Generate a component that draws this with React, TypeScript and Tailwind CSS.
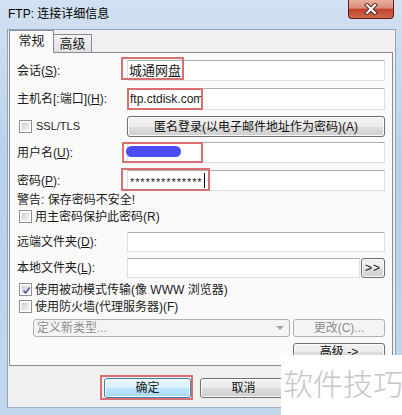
import type { ReactNode } from "react";

const FONT = "font-['Liberation_Sans','Noto_Sans_CJK_SC',sans-serif]";
const BTN =
  "flex items-center justify-center rounded-[3px] border border-[#707070] bg-[linear-gradient(#f2f2f2_0%,#ebebeb_50%,#dddddd_51%,#cfcfcf_100%)] shadow-[inset_0_0_0_1px_#fbfbfb] text-[12px] text-[#111]";
const BTN_OFF =
  "flex items-center justify-center rounded-[3px] border border-[#adb2b5] bg-[#f4f4f4] text-[12px] text-[#8d8d8d]";
const INPUT =
  "h-full bg-white border border-[#dbdfe6] border-t-[#abadb3] flex items-center px-[2px] text-[12px]";

const Check = ({ checked = false }: { checked?: boolean }) => (
  <span className="w-[13px] h-[13px] border border-[#8e8f8f] bg-white p-px shrink-0">
    <span className="relative block w-full h-full bg-[linear-gradient(135deg,#cbcfd5,#f6f6f6)] border border-[#f0f0f0]">
      {checked && (
        <svg viewBox="0 0 9 9" className="absolute inset-0 w-[9px] h-[9px]">
          <path d="M1.5 4.5 L3.6 7 L7.8 1.5" fill="none" stroke="#4a5f97" strokeWidth="1.7" />
        </svg>
      )}
    </span>
  </span>
);

const Row = ({ label, top, h, children }: { label: ReactNode; top: string; h: string; children?: ReactNode }) => (
  <div className={`flex items-center ${top} ${h}`}>
    <div className="w-[110px] shrink-0 text-[12px]">{label}</div>
    <div className="flex-1 h-full flex">{children}</div>
  </div>
);

const RedBox = ({ cls }: { cls: string }) => (
  <div className={`absolute border-2 border-[#d97070] ${cls}`} />
);

export default function App() {
  return (
    <div className={`relative w-[402px] h-[415px] overflow-hidden bg-[linear-gradient(180deg,#d2e1f2,#b9d0e9_40%,#c3d6ec)] text-[#1a1a1a] ${FONT}`}>
      {/* title bar */}
      <div className="h-[29px] flex items-center pl-[8px] pb-[2px] text-[12px] text-black">
        FTP: 连接详细信息
      </div>
      <div className="absolute top-0 right-[8px] w-[46px] h-[19px] rounded-b-[4px] border border-t-0 border-[#5e1c12] bg-[linear-gradient(#eab0a2,#d98c79_45%,#c2432a_52%,#cf6a4e_100%)] flex items-center justify-center">
        <svg viewBox="0 0 14 12" className="w-[14px] h-[12px]">
          <path d="M3 2 L11 10 M11 2 L3 10" stroke="#4a2018" strokeWidth="4" strokeLinecap="square" />
          <path d="M3 2 L11 10 M11 2 L3 10" stroke="#fff" strokeWidth="2.2" strokeLinecap="square" />
        </svg>
      </div>

      {/* client area */}
      <div className="ml-[7px] mr-[6px] h-[379px] bg-[#f0f0f0] border border-[#8ea5c0] border-b-[#9fb4cc] flex flex-col">
        {/* tabs */}
        <div className="flex items-end h-[23px] pl-px relative z-10">
          <div className="w-[45px] h-[23px] bg-[#fafafa] border border-b-0 border-[#898c95] flex items-center justify-center text-[13px] pb-[2px]">
            常规
          </div>
          <div className="w-[38px] h-[18px] mb-px bg-[linear-gradient(#f3f3f3,#e1e1e1)] border border-l-0 border-b-0 border-[#898c95] flex items-center justify-center text-[13px]">
            高级
          </div>
        </div>

        {/* panel */}
        <div className="ml-px mr-[2px] -mt-px h-[314px] bg-[#fafafa] border border-[#898c95] pl-[7px] pr-[7px] flex flex-col">
          <Row label={<>会话(<u>S</u>):</>} top="mt-[7px]" h="h-[21px]">
            <div className={`${INPUT} flex-1 pl-px text-[13px]`}>城通网盘</div>
          </Row>
          <Row label={<>主机名[:端口](<u>H</u>):</>} top="mt-[7px]" h="h-[22px]">
            <div className={`${INPUT} flex-1 pl-[2px]`}>ftp.ctdisk.com</div>
          </Row>
          <div className="mt-[6px] h-[21px] flex items-center">
            <div className="w-[110px] shrink-0 flex items-center gap-[4px] pl-[2px] text-[11px]">
              <Check />
              SSL/TLS
            </div>
            <div className={`${BTN} flex-1 h-full`}>匿名登录(以电子邮件地址作为密码)(A)</div>
          </div>
          <Row label={<>用户名(<u>U</u>):</>} top="mt-[5px]" h="h-[21px]">
            <div className={`${INPUT} flex-1`} />
          </Row>
          <Row label={<>密码(<u>P</u>):</>} top="mt-[7px]" h="h-[21px]">
            <div className={`${INPUT} flex-1 pl-[2px]`}>
              <span className="text-[11px] tracking-[0.9px] pt-[3px]">**************</span>
              <span className="w-px h-[15px] bg-black ml-px" />
            </div>
          </Row>
          <div className="h-[17px] flex items-center text-[12px]">警告: 保存密码不安全!</div>
          <div className="h-[17px] flex items-center gap-[3px] pl-[2px] text-[12px]">
            <Check />
            用主密码保护此密码(R)
          </div>
          <Row label={<>远端文件夹(<u>D</u>):</>} top="mt-[7px]" h="h-[20px]">
            <div className={`${INPUT} flex-1`} />
          </Row>
          <Row label={<>本地文件夹(<u>L</u>):</>} top="mt-[6px]" h="h-[20px]">
            <div className={`${INPUT} flex-1`} />
            <div className={`${BTN} w-[24px] ml-px text-[11px] tracking-[1px]`}>&gt;&gt;</div>
          </Row>
          <div className="mt-[3px] h-[17px] flex items-center gap-[3px] pl-[2px] text-[12px]">
            <Check checked />
            使用被动模式传输(像 WWW 浏览器)
          </div>
          <div className="h-[17px] flex items-center gap-[3px] pl-[2px] text-[12px]">
            <Check />
            使用防火墙(代理服务器)(F)
          </div>
          <div className="mt-[4px] h-[18px] flex gap-[3px] pl-[16px]">
            <div className="flex-1 h-full rounded-[3px] border border-[#adb2b5] bg-[#f4f4f4] flex items-center pl-[3px] pr-[5px] text-[12px] text-[#8d8d8d]">
              <span className="flex-1">定义新类型...</span>
              <span className="w-0 h-0 border-l-[4px] border-r-[4px] border-t-[4px] border-l-transparent border-r-transparent border-t-[#a5a5a5]" />
            </div>
            <div className={`${BTN_OFF} w-[92px]`}>更改(C)...</div>
          </div>
          <div className="mt-[6px] h-[18px] flex justify-end">
            <div className={`${BTN} w-[92px]`}>高级 -&gt;</div>
          </div>
        </div>

        {/* dialog buttons */}
        <div className="mt-[12px] h-[20px] flex gap-[9px] pl-[96px]">
          <div className="w-[87px] h-full rounded-[3px] border border-[#3c7fb1] bg-[linear-gradient(#eaf6fd_0%,#d9f0fc_50%,#bee6fd_51%,#a7d9f5_100%)] shadow-[inset_0_0_0_1px_#f4fbff] flex items-center justify-center text-[12px]">
            确定
          </div>
          <div className={`${BTN} w-[87px] h-full`}>取消</div>
        </div>
      </div>

      {/* highlight marks over fields */}
      <RedBox cls="left-[121px] top-[57px] w-[63px] h-[23px]" />
      <RedBox cls="left-[127px] top-[88px] w-[76px] h-[22px]" />
      <RedBox cls="left-[122px] top-[142px] w-[81px] h-[21px]" />
      <RedBox cls="left-[121px] top-[168px] w-[89px] h-[23px]" />
      <div className="absolute left-[126px] top-[146px] w-[55px] h-[11px] rounded-full bg-[#4c4cf6]" />
      <RedBox cls="left-[100px] top-[375px] w-[93px] h-[25px]" />

      {/* watermark */}
      <div className="absolute left-[281px] top-[355px] w-[121px] h-[60px] bg-white pt-[6px] pl-[2px]">
        <span className="block whitespace-nowrap text-[30px] leading-[42px] text-[#c6c6c6] font-['Noto_Sans_CJK_SC',sans-serif] font-light">
          软件技巧
        </span>
      </div>
    </div>
  );
}
